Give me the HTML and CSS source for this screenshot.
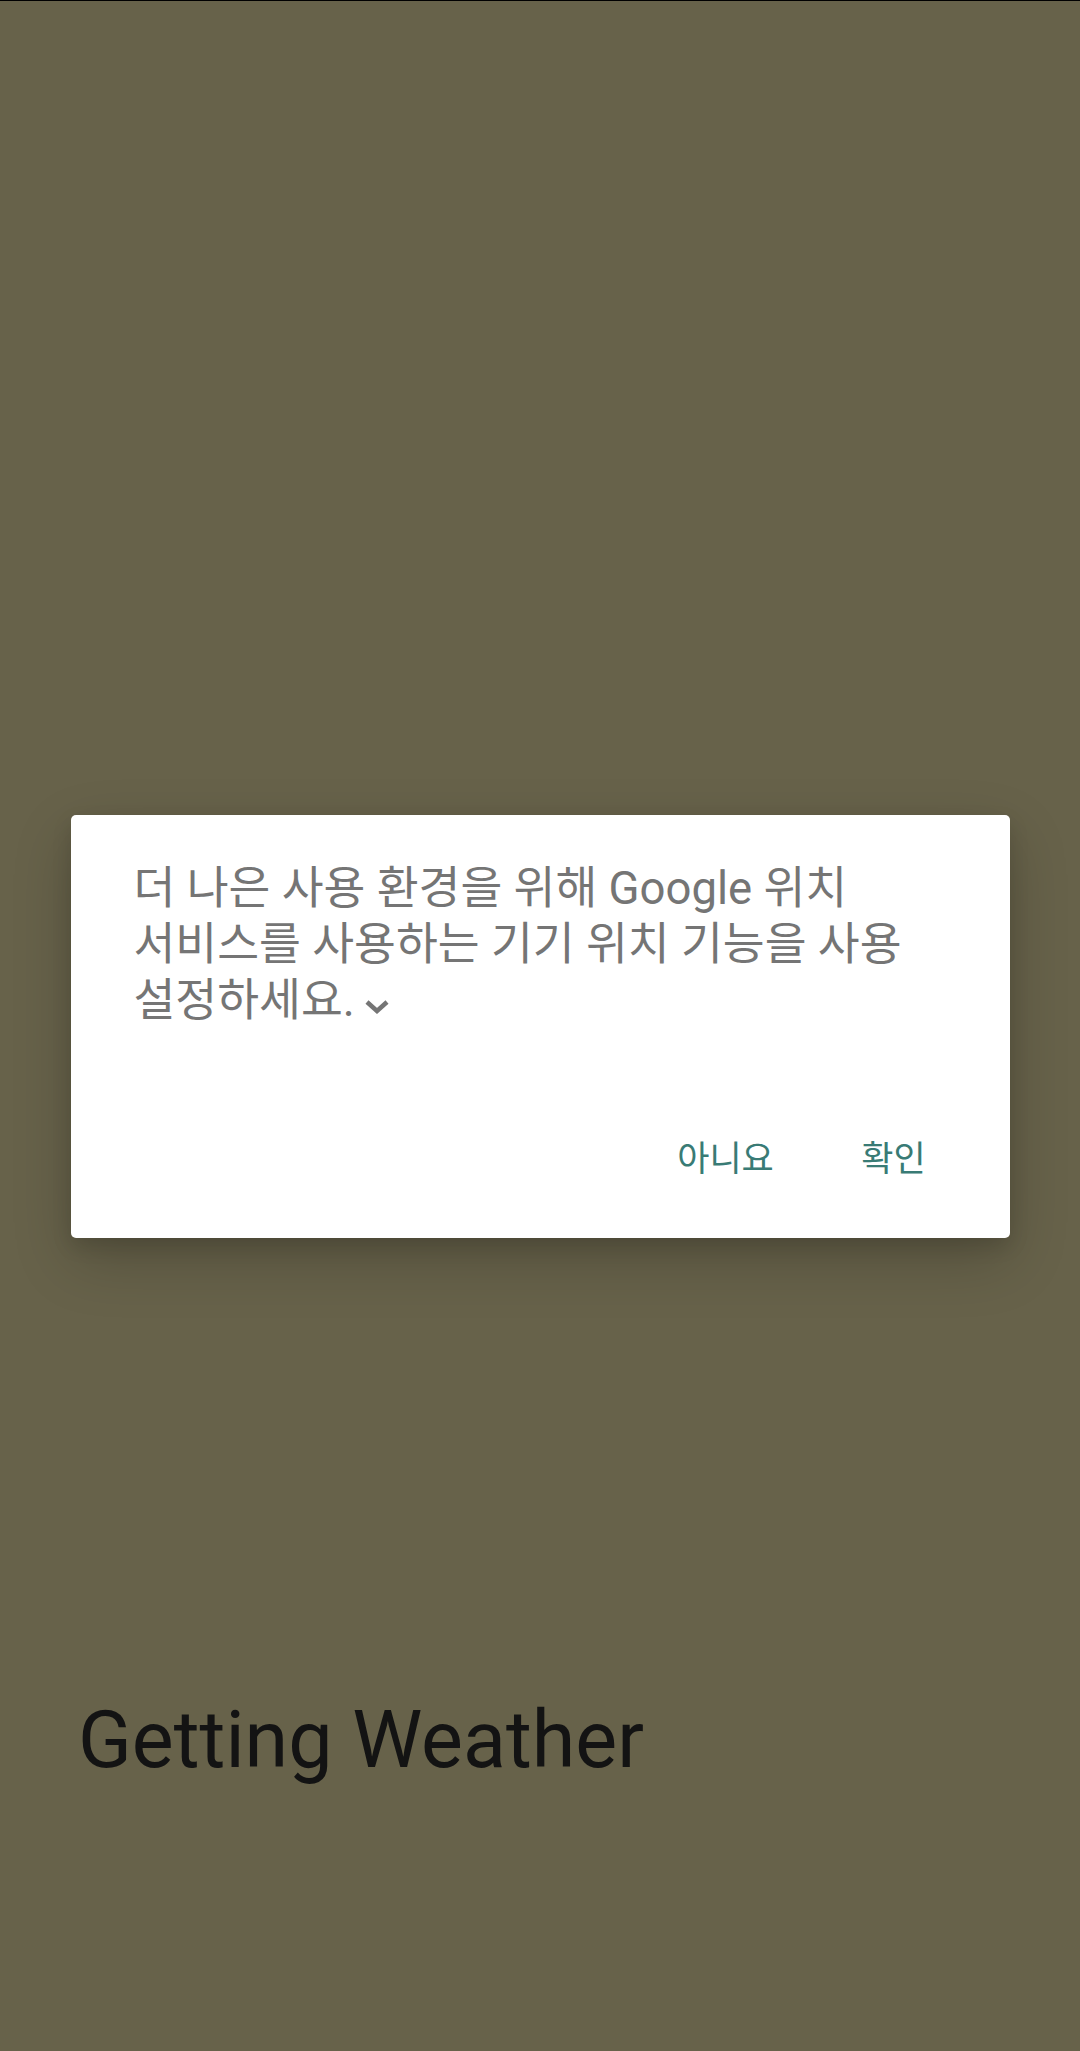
FILE: index.html
```html
<!DOCTYPE html>
<html lang="ko">
<head>
<meta charset="utf-8">
<link rel="stylesheet" href="styles.css">
</head>
<body>
<div class="screen">
  <main class="content">
    <h1 class="title">Getting Weather</h1>
  </main>
  <div class="overlay">
    <div class="dialog">
      <p class="message">더 나은 사용 환경을 위해 Google 위치 서비스를 사용하는 기기 위치 기능을 사용 설정하세요.<svg class="chevron" viewBox="0 0 26 14" width="26" height="14"><path d="M3 2 L13 11 L23 2" fill="none" stroke="#757575" stroke-width="4.5"/></svg></p>
      <div class="actions">
        <button class="btn">아니요</button>
        <button class="btn">확인</button>
      </div>
    </div>
  </div>
</div>
</body>
</html>
```

FILE: styles.css
```css
html, body {
  margin: 0;
  padding: 0;
}
body {
  background: #67624a;
  font-family: Roboto, "Noto Sans CJK KR", sans-serif;
}
.screen {
  position: relative;
  width: 1080px;
  height: 2051px;
  border-top: 1px solid #000;
  box-sizing: border-box;
  overflow: hidden;
}
.content {
  padding: 1691px 0 0 78px;
}
.title {
  margin: 0;
  font-family: Roboto, sans-serif;
  font-weight: 400;
  font-size: 79px;
  line-height: 96px;
  color: #131313;
  white-space: nowrap;
}
.overlay {
  position: absolute;
  inset: 0;
  display: flex;
  align-items: center;
  justify-content: center;
}
.dialog {
  width: 939px;
  height: 423px;
  box-sizing: border-box;
  background: #fff;
  border-radius: 5px;
  box-shadow: 0 22px 60px rgba(0, 0, 0, 0.2), 0 8px 20px rgba(0, 0, 0, 0.12);
  display: flex;
  flex-direction: column;
  padding: 46px 0 0 0;
}
.message {
  margin: 0;
  padding: 0 63px;
  font-size: 45.5px;
  line-height: 56px;
  color: #757575;
  word-break: keep-all;
}
.chevron {
  margin-left: 9px;
  vertical-align: 2px;
}
.actions {
  margin-top: auto;
  display: flex;
  justify-content: flex-end;
  padding: 0 32px 35px 0;
}
.btn {
  min-width: 168px;
  height: 94px;
  border: none;
  background: transparent;
  font-family: Roboto, "Noto Sans CJK KR", sans-serif;
  font-size: 35px;
  color: #397b75;
  padding: 0 20px;
}
```
